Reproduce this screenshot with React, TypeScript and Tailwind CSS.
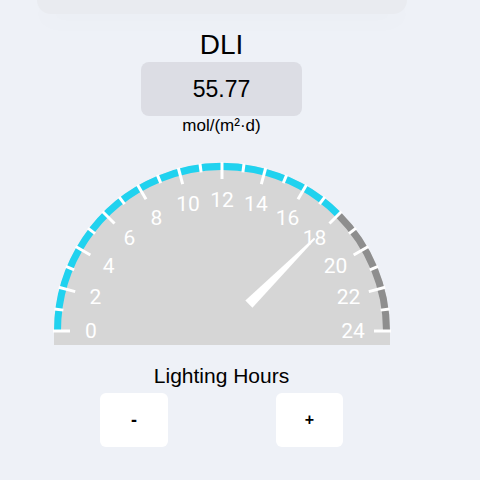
import React from "react";

const CX = 170;
const CY = 171;
const VALUE_HOURS = 18;

const polar = (r: number, hour: number) => {
  const a = Math.PI - (hour * Math.PI) / 24;
  return { x: CX + r * Math.cos(a), y: CY - r * Math.sin(a) };
};

const arcPath = (r: number, from: number, to: number) => {
  const s = polar(r, from);
  const e = polar(r, to);
  return `M ${s.x} ${s.y} A ${r} ${r} 0 0 1 ${e.x} ${e.y}`;
};

const Gauge: React.FC = () => {
  const hours = Array.from({ length: 25 }, (_, i) => i);
  const base = polar(38, VALUE_HOURS);
  const tip = polar(131, VALUE_HOURS);
  // unit vector perpendicular to the needle
  const a = Math.PI - (VALUE_HOURS * Math.PI) / 24 + Math.PI / 2;
  const nx = Math.cos(a);
  const ny = -Math.sin(a);

  return (
    <svg width="340" height="186" viewBox="0 0 340 186">
      <path d={`M 2 ${CY} A 168 168 0 0 1 338 ${CY} L 338 185 L 2 185 Z`} fill="#d6d6d6" />
      <path d={arcPath(164.5, 0, VALUE_HOURS)} stroke="#20d2ef" strokeWidth="7" fill="none" />
      <path d={arcPath(164.5, VALUE_HOURS, 24)} stroke="#8e8e8e" strokeWidth="7" fill="none" />
      {hours.map((h) => {
        const major = h % 2 === 0;
        const p1 = polar(169, h);
        const p2 = polar(major ? 152 : 160, h);
        return (
          <line
            key={h}
            x1={p1.x}
            y1={p1.y}
            x2={p2.x}
            y2={p2.y}
            stroke="#ffffff"
            strokeWidth="3"
          />
        );
      })}
      {hours
        .filter((h) => h % 2 === 0)
        .map((h) => {
          const p = polar(131, h);
          return (
            <text
              key={h}
              x={p.x}
              y={p.y}
              fill="#ffffff"
              fontSize="21"
              fontWeight="400"
              textAnchor="middle"
              dominantBaseline="central"
              style={{ fontFamily: "Roboto, 'DejaVu Sans', sans-serif" }}
            >
              {h}
            </text>
          );
        })}
      <polygon
        points={`${base.x + nx * 5},${base.y + ny * 5} ${tip.x + nx * 1},${tip.y + ny * 1} ${tip.x - nx * 1},${tip.y - ny * 1} ${base.x - nx * 5},${base.y - ny * 5}`}
        fill="#ffffff"
      />
    </svg>
  );
};

const App: React.FC = () => {
  return (
    <div className="w-[480px] h-[480px] bg-[#eef1f7] overflow-hidden font-['Liberation_Sans',Arial,sans-serif] text-black">
      <div className="w-[443px] flex flex-col items-center">
        <div className="h-[14px] w-[370px] rounded-b-[44px] bg-[#e9ebf0] shadow-[0_8px_24px_rgba(0,0,0,0.02)]" />
        <h1 className="mt-[17px] text-[28px] leading-none">DLI</h1>
        <div className="mt-[3px] w-[161px] h-[54px] rounded-lg bg-[#dcdde4] flex items-center justify-center text-[23px]">
          55.77
        </div>
        <p className="mt-px text-[17px] leading-none">mol/(m²·d)</p>
        <div className="mt-[26px]">
          <Gauge />
        </div>
        <p className="mt-[19px] text-[21px] leading-none">Lighting Hours</p>
        <div className="mt-[7px] flex gap-[108px]">
          <button className="w-[68px] h-[54px] rounded-md bg-white flex items-center justify-center text-[18px] font-bold">
            -
          </button>
          <button className="w-[67px] h-[54px] rounded-md bg-white flex items-center justify-center text-[16px] font-bold">
            +
          </button>
        </div>
      </div>
    </div>
  );
};

export default App;
